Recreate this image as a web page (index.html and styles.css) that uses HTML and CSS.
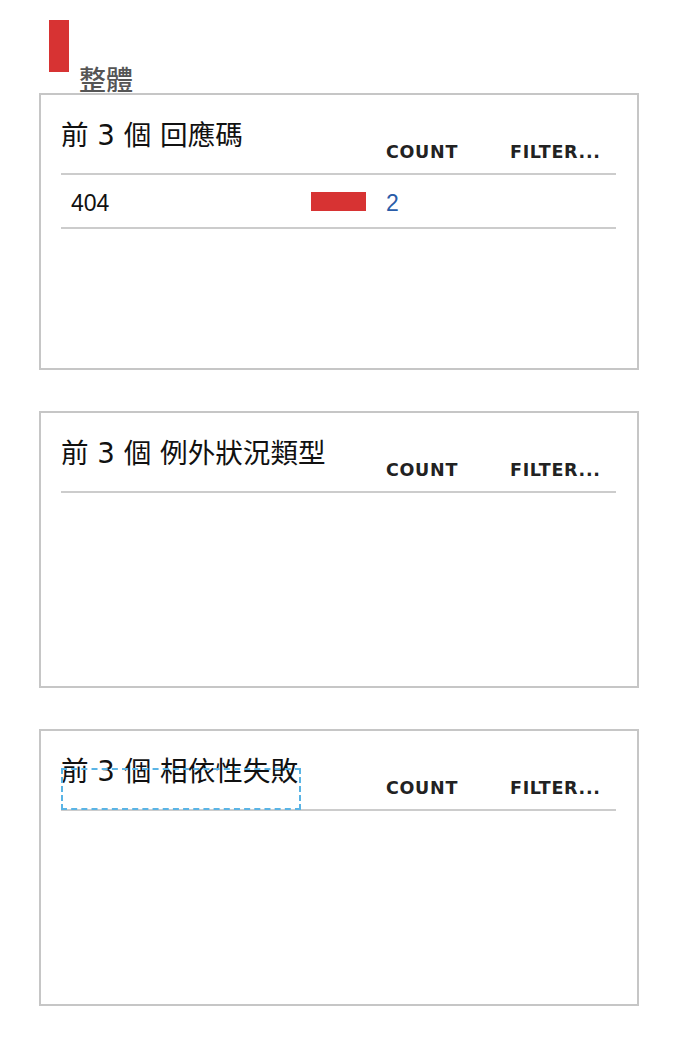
FILE: index.html
```html
<!DOCTYPE html>
<html>
<head>
<meta charset="utf-8">
<link rel="stylesheet" href="styles.css">
</head>
<body>
<div class="page">
  <div class="section-head">
    <div class="mark"></div>
    <div class="section-title">整體</div>
  </div>

  <div class="card">
    <div class="grid head">
      <div class="title">前 3 個 回應碼</div>
      <div class="col">COUNT</div>
      <div class="col">FILTER...</div>
    </div>
    <div class="grid row">
      <div class="cell name">404</div>
      <div class="cell"><div class="bar" style="width:55px"></div></div>
      <div class="cell num">2</div>
      <div class="cell"></div>
    </div>
  </div>

  <div class="card">
    <div class="grid head">
      <div class="title">前 3 個 例外狀況類型</div>
      <div class="col">COUNT</div>
      <div class="col">FILTER...</div>
    </div>
  </div>

  <div class="card">
    <div class="grid head">
      <div class="title focused">前 3 個 相依性失敗</div>
      <div class="col">COUNT</div>
      <div class="col">FILTER...</div>
    </div>
  </div>
</div>
</body>
</html>
```

FILE: styles.css
```css
html, body {
  margin: 0;
  padding: 0;
  background: #ffffff;
}
.page {
  padding: 20px 0 0 39px;
  font-family: "DejaVu Sans", "Noto Sans CJK TC", sans-serif;
}
.section-head {
  display: flex;
  align-items: flex-end;
  height: 73px;
  padding-left: 10px;
}
.mark {
  width: 20px;
  height: 52px;
  background: #d73333;
  align-self: flex-start;
}
.section-title {
  margin-left: 10px;
  font-family: "Noto Sans CJK TC", sans-serif;
  font-weight: 500;
  font-size: 27px;
  line-height: 32px;
  color: #555555;
  margin-bottom: -2px;
}
.card {
  box-sizing: border-box;
  width: 600px;
  height: 277px;
  border: 2px solid #c6c6c6;
  margin-bottom: 41px;
  padding: 0 20px;
}
.grid {
  display: grid;
  grid-template-columns: 250px 75px 124px 106px;
  width: 555px;
}
.head {
  height: 80px;
  border-bottom: 2px solid #cccccc;
  box-sizing: border-box;
  align-items: end;
}
.title {
  grid-column: 1 / 3;
  align-self: start;
  position: relative;
  margin-top: 25px;
  font-family: "DejaVu Sans", "Noto Sans CJK TC", sans-serif;
  font-size: 27.6px;
  line-height: 32px;
  color: #111111;
  white-space: nowrap;
}
.focused::after {
  content: "";
  position: absolute;
  left: 0;
  top: 12px;
  width: 240px;
  height: 42px;
  box-sizing: border-box;
  border: 2px dashed #5ab4e5;
}
.col {
  font-family: "DejaVu Sans", sans-serif;
  font-weight: bold;
  font-size: 17.5px;
  letter-spacing: 0.7px;
  color: #222222;
  padding-bottom: 11px;
}
.row {
  height: 54px;
  border-bottom: 2px solid #cccccc;
  box-sizing: border-box;
  align-items: center;
}
.cell.name {
  padding-left: 10px;
  padding-top: 4px;
  font-family: "Liberation Sans", sans-serif;
  font-size: 23px;
  color: #111111;
}
.bar {
  height: 19px;
  margin-top: 1px;
  background: #d73333;
}
.num {
  padding-top: 4px;
  font-family: "Liberation Sans", sans-serif;
  font-size: 23px;
  color: #2a5ca8;
}
```
